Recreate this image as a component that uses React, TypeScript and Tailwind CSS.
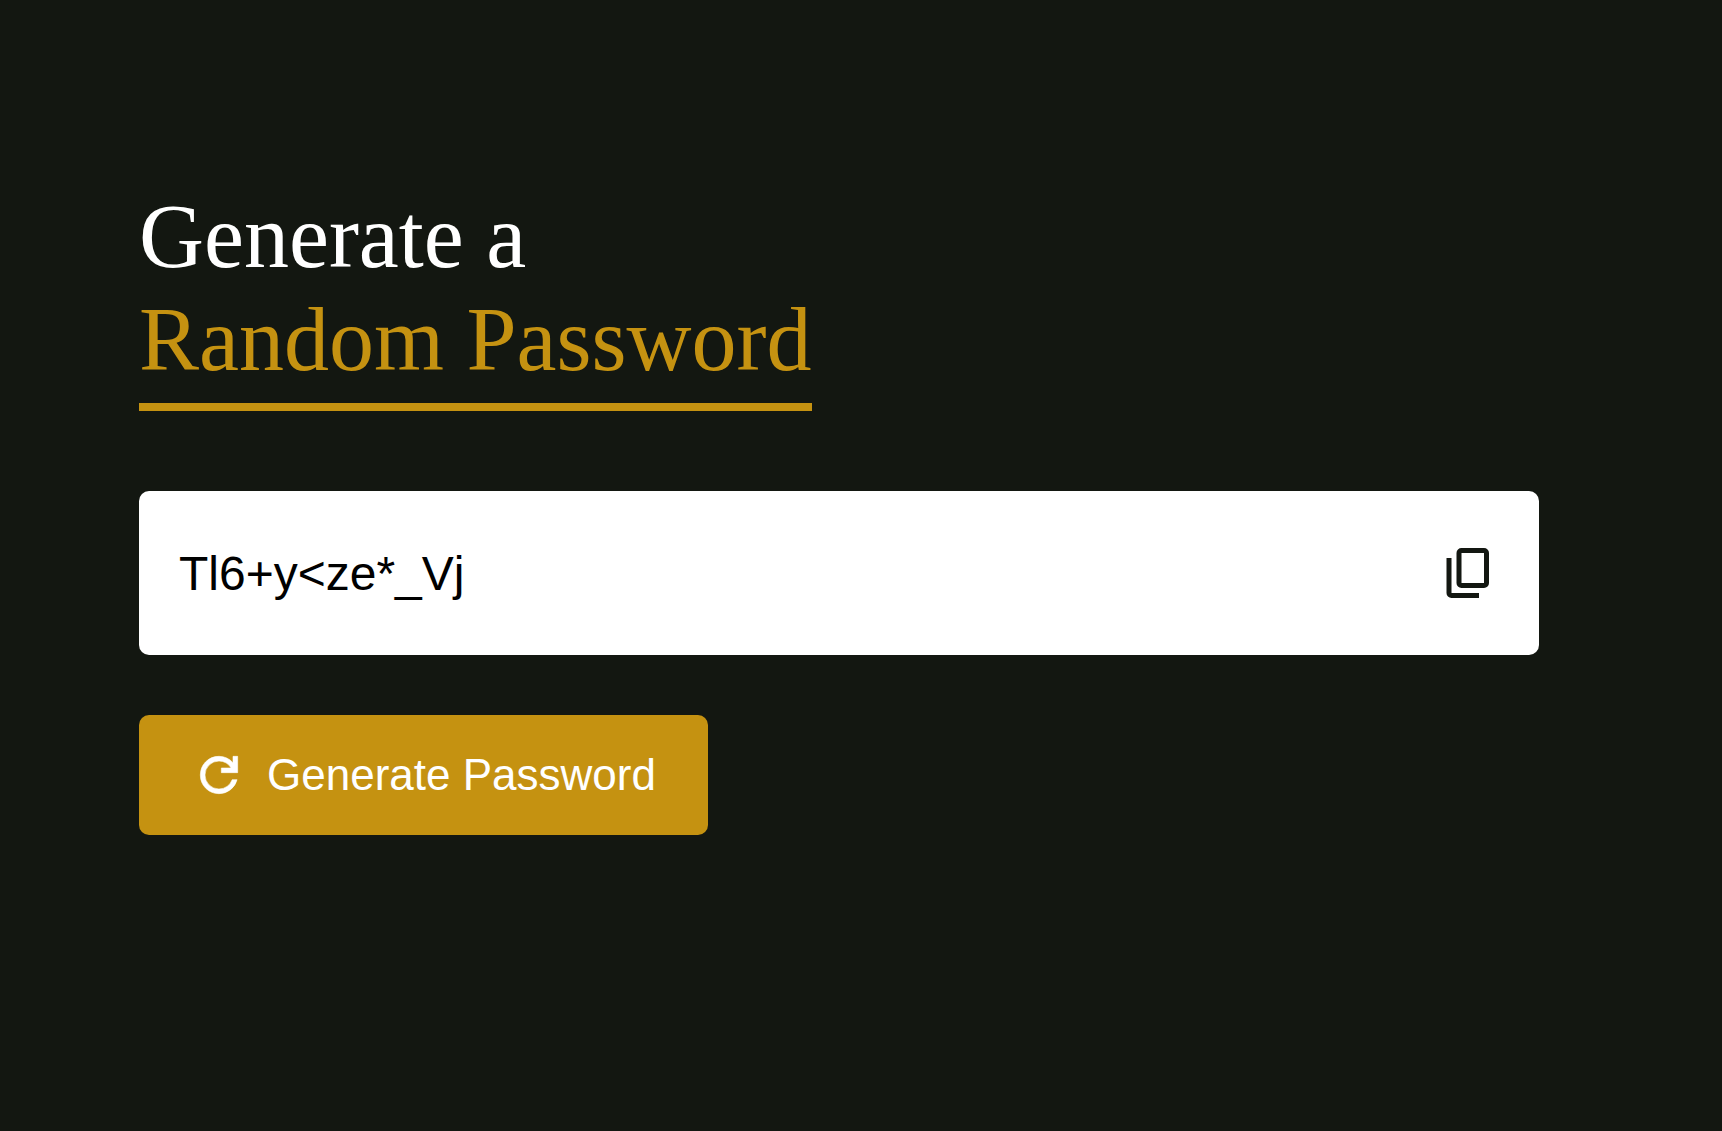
import { useState } from "react";

const CHARS =
  "ABCDEFGHIJKLMNOPQRSTUVWXYZabcdefghijklmnopqrstuvwxyz0123456789@#$%^&*()_+~|}{[]></-=";
const LENGTH = 12;

function createPassword() {
  let out = "";
  while (out.length < LENGTH) {
    out += CHARS[Math.floor(Math.random() * CHARS.length)];
  }
  return out;
}

function CopyIcon() {
  return (
    <svg viewBox="0 -960 960 960" className="size-[60px]" fill="currentColor" aria-hidden="true">
      <path d="M360-240q-33 0-56.500-23.500T280-320v-480q0-33 23.500-56.500T360-880h360q33 0 56.500 23.500T800-800v480q0 33-23.500 56.500T720-240H360Zm0-80h360v-480H360v480ZM200-80q-33 0-56.500-23.500T120-160v-560h80v560h440v80H200Zm160-240v-480 480Z" />
    </svg>
  );
}

function RefreshIcon() {
  return (
    <svg
      viewBox="0 -960 960 960"
      className="size-14 shrink-0"
      fill="currentColor"
      stroke="currentColor"
      strokeWidth="10"
      aria-hidden="true"
    >
      <path d="M480-160q-134 0-227-93t-93-227q0-134 93-227t227-93q69 0 132 28.500T720-690v-110h80v280H520v-80h168q-32-56-87.500-88T480-720q-100 0-170 70t-70 170q0 100 70 170t170 70q77 0 139-44t87-116h84q-28 106-114 173t-196 67Z" />
    </svg>
  );
}

export default function App() {
  const [password, setPassword] = useState("Tl6+y<ze*_Vj");

  return (
    <main className="min-h-screen bg-[#131711] pt-[185px] pr-10 pb-20 pl-[139px] font-['Liberation_Sans',Arial,sans-serif] text-white">
      <div className="flex max-w-[1400px] flex-col items-start">
        <h1 className="font-['Liberation_Serif','Times_New_Roman',serif] text-[90px] leading-[103px]">
          Generate a
          <span className="block w-fit border-b-8 border-[#c59211] pb-3 text-[#c59211]">
            Random Password
          </span>
        </h1>

        <div className="mt-20 flex h-[164px] w-full items-center rounded-[10px] bg-white px-10 text-[#131711]">
          <input
            type="text"
            aria-label="Password"
            readOnly
            value={password}
            className="min-w-0 flex-1 bg-transparent text-5xl text-black outline-none"
          />
          <button
            type="button"
            aria-label="Copy password"
            className="shrink-0 cursor-pointer"
            onClick={() => navigator.clipboard?.writeText(password)}
          >
            <CopyIcon />
          </button>
        </div>

        <button
          type="button"
          className="mt-[60px] flex h-[120px] cursor-pointer items-center gap-5 rounded-[10px] bg-[#c59211] px-[52px] text-[44px] whitespace-nowrap"
          onClick={() => setPassword(createPassword())}
        >
          <RefreshIcon />
          Generate Password
        </button>
      </div>
    </main>
  );
}
